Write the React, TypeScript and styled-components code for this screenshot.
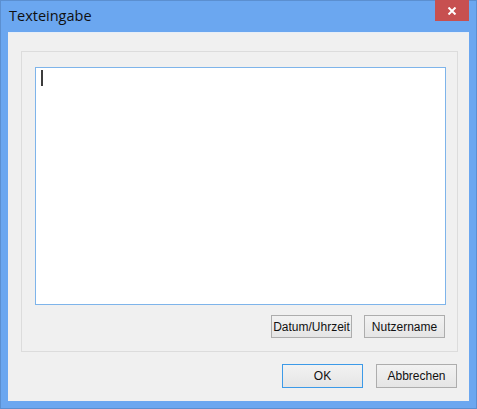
import React from "react";
import styled, { createGlobalStyle } from "styled-components";

const Global = createGlobalStyle`
  html, body { margin: 0; padding: 0; }
  body { width: 477px; height: 409px; overflow: hidden; background: #6aa6ef; }
  * { box-sizing: border-box; }
`;

const Window = styled.div`
  width: 477px;
  height: 409px;
  background: #6ba7f0;
  border: 1px solid #5b8fd0;
  display: flex;
  flex-direction: column;
  font-family: "Liberation Sans", Tahoma, sans-serif;
`;

const TitleBar = styled.div`
  height: 31px;
  display: flex;
  align-items: flex-start;
  justify-content: space-between;
  padding: 0 7px 0 8px;
`;

const Title = styled.div`
  font-family: "Open Sans", "Noto Sans", sans-serif;
  font-size: 14.5px;
  color: #101010;
  line-height: 18px;
  margin-top: 6px;
`;

const CloseButton = styled.div`
  width: 34px;
  height: 21px;
  margin-top: -1px;
  background: #c75050;
  display: flex;
  align-items: center;
  justify-content: center;
`;

const Client = styled.div`
  margin: 0 7px 0 7px;
  width: 461px;
  height: 369px;
  background: #f0f0f0;
  border-top: 1px solid #e6eef8;
  display: flex;
  flex-direction: column;
  align-items: flex-start;
`;

const Group = styled.div`
  margin: 18px 0 0 13px;
  width: 437px;
  height: 301px;
  border: 1px solid #dcdcdc;
  padding: 15px 11px 0 13px;
  display: flex;
  flex-direction: column;
`;

const TextBox = styled.div`
  width: 411px;
  height: 238px;
  background: #ffffff;
  border: 1px solid #7eb4ea;
  padding: 2px 5px;
`;

const Caret = styled.span`
  display: block;
  width: 2px;
  height: 16px;
  background: #3c3c3c;
`;

const ButtonRow = styled.div<{ $gap: number }>`
  display: flex;
  justify-content: flex-end;
  gap: ${(p) => p.$gap}px;
`;

const GroupButtons = styled(ButtonRow)`
  margin-top: 10px;
  padding-right: 1px;
`;

const DialogButtons = styled(ButtonRow)`
  width: 100%;
  margin-top: 12px;
  padding-right: 12px;
`;

const Button = styled.button<{ $default?: boolean; $h: number }>`
  width: 81px;
  height: ${(p) => p.$h}px;
  padding: 0;
  border: 1px solid ${(p) => (p.$default ? "#3c9ae8" : "#adadad")};
  border-radius: 0;
  background: linear-gradient(#f2f2f2, #e5e5e5);
  font-family: "Liberation Sans", Tahoma, sans-serif;
  font-size: 12px;
  color: #111;
  display: flex;
  align-items: center;
  justify-content: center;
`;

export default function App() {
  return (
    <>
      <Global />
      <Window>
        <TitleBar>
          <Title>Texteingabe</Title>
          <CloseButton>
            <svg width="10" height="8" viewBox="0 0 10 8">
              <path d="M1.5 0.5 L8.5 7.5 M8.5 0.5 L1.5 7.5" stroke="#fff" strokeWidth="2" />
            </svg>
          </CloseButton>
        </TitleBar>
        <Client>
          <Group>
            <TextBox>
              <Caret />
            </TextBox>
            <GroupButtons $gap={12}>
              <Button $h={23}>Datum/Uhrzeit</Button>
              <Button $h={23}>Nutzername</Button>
            </GroupButtons>
          </Group>
          <DialogButtons $gap={13}>
            <Button $h={24} $default>OK</Button>
            <Button $h={24}>Abbrechen</Button>
          </DialogButtons>
        </Client>
      </Window>
    </>
  );
}
